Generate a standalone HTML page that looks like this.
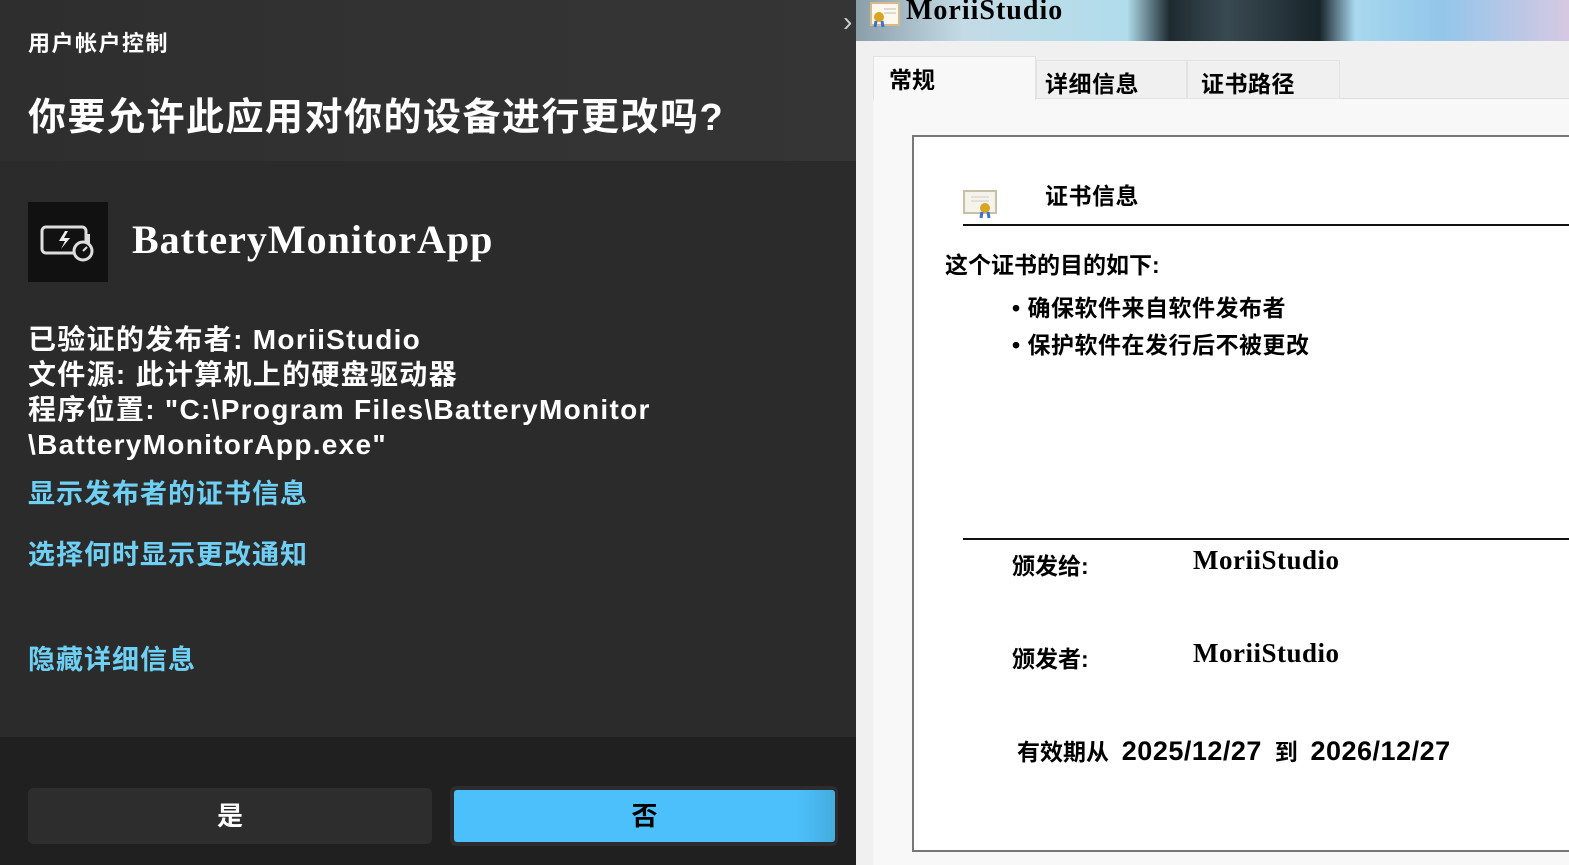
<!DOCTYPE html>
<html><head><meta charset="utf-8"><style>
*{margin:0;padding:0;box-sizing:border-box}
body{width:1569px;height:865px;overflow:hidden;position:relative;font-family:"Liberation Sans","Noto Sans CJK SC",sans-serif;background:#f0f0f0}
.a{position:absolute;white-space:nowrap}
#left{position:absolute;left:0;top:0;width:856px;height:865px;background:#2b2b2b;color:#fff}
#hd{position:absolute;left:0;top:0;width:856px;height:161px;background:linear-gradient(90deg,#2e2e2e,#333 60%,#353535)}
#ft{position:absolute;left:0;top:737px;width:856px;height:128px;background:#202020}
.b{font-weight:bold}
.link{color:#6fd0f5;font-weight:bold;font-size:27px;letter-spacing:1px}
.info{font-size:28px;font-weight:bold;line-height:35px;letter-spacing:1.3px}
.k{color:#000;font-weight:bold}
</style></head><body>
<div id="left">
<div id="hd"></div>
<div class="a b" style="left:28px;top:26px;font-size:22px;letter-spacing:1.5px">用户帐户控制</div>
<div class="a b" style="left:28px;top:86px;font-size:38px;letter-spacing:1.5px">你要允许此应用对你的设备进行更改吗?</div>
<div class="a" style="left:28px;top:202px;width:80px;height:80px;background:#111">
<svg width="80" height="80" viewBox="0 0 80 80"><rect x="14" y="25" width="44" height="26" rx="4" fill="none" stroke="#ddd" stroke-width="3"/><rect x="58" y="32" width="4" height="12" fill="#ddd"/><path d="M37 29 L31 39 L37 39 L33 47 L42 36 L36 36 L40 29Z" fill="#eee"/><circle cx="55" cy="49" r="9" fill="#111" stroke="#ddd" stroke-width="3"/><path d="M55 49 L59 45" stroke="#ddd" stroke-width="2"/></svg></div>
<div class="a b" style="left:132px;top:216px;font-size:40px;font-family:'Liberation Serif',serif;letter-spacing:1px">BatteryMonitorApp</div>
<div class="a info" style="left:28px;top:322px">已验证的发布者: MoriiStudio<br>文件源: 此计算机上的硬盘驱动器<br>程序位置: "C:\Program Files\BatteryMonitor<br>\BatteryMonitorApp.exe"</div>
<div class="a link" style="left:28px;top:472px">显示发布者的证书信息</div>
<div class="a link" style="left:28px;top:533px">选择何时显示更改通知</div>
<div class="a link" style="left:28px;top:638px">隐藏详细信息</div>
<div id="ft"></div>
<div class="a" style="left:28px;top:788px;width:404px;height:56px;background:#2d2d2d;border-radius:5px;font-size:26px;font-weight:bold;text-align:center;line-height:56px">是</div>
<div class="a" style="left:450px;top:786px;width:388px;height:60px;background:#2d2d2d;border-radius:6px"></div>
<div class="a" style="left:454px;top:790px;width:381px;height:52px;background:linear-gradient(90deg,#4cc0fb 90%,#45acdf);border-radius:3px;color:#000;font-size:26px;font-weight:bold;text-align:center;line-height:52px">否</div>
</div>
<div class="a" style="left:843px;top:6px;color:#ccc;font-size:28px">›</div>
<div class="a" style="left:856px;top:0;width:713px;height:41px;background:linear-gradient(90deg,#8a9ea8 0%,#c4dbe6 15%,#b0dcec 38%,#1e2a30 44%,#3a4a52 52%,#18242a 65%,#a8d8ee 70%,#92c6ea 82%,#d6c8e2 100%)"></div>
<svg class="a" style="left:870px;top:2px" width="30" height="26" viewBox="0 0 30 26"><rect x="1" y="1" width="28" height="22" fill="#fdf8ee" stroke="#d9b98a" stroke-width="2"/><line x1="14" y1="7" x2="26" y2="7" stroke="#bbb"/><line x1="14" y1="11" x2="26" y2="11" stroke="#bbb"/><circle cx="9" cy="15" r="5" fill="#d9a520"/><path d="M6 19 L5 25 M12 19 L13 25" stroke="#3a6fd8" stroke-width="3"/></svg>
<div class="a b" style="left:906px;top:-5px;font-size:28px;font-family:'Liberation Serif',serif;color:#000;letter-spacing:1px">MoriiStudio</div>
<div class="a" style="left:856px;top:41px;width:16px;height:824px;background:#f0f0f0"></div>
<div class="a" style="left:873px;top:98px;width:696px;height:767px;background:#f8f8f8;border-top:1px solid #ddd"></div>
<div class="a" style="left:873px;top:56px;width:163px;height:44px;background:#f8f8f8;border:1px solid #e2e2e2;border-bottom:none"></div>
<div class="a" style="left:1036px;top:60px;width:151px;height:39px;background:#f0f0f0;border:1px solid #e2e2e2"></div>
<div class="a" style="left:1187px;top:60px;width:153px;height:39px;background:#f0f0f0;border:1px solid #e2e2e2"></div>
<div class="a k" style="left:889px;top:61px;font-size:23px">常规</div>
<div class="a k" style="left:1045px;top:65px;font-size:23px;letter-spacing:0.5px">详细信息</div>
<div class="a k" style="left:1201px;top:65px;font-size:23px;letter-spacing:0.5px">证书路径</div>
<div class="a" style="left:912px;top:135px;width:657px;height:717px;background:#fff;border:2px solid #777;border-right:none"></div>
<svg class="a" style="left:963px;top:189px" width="34" height="30" viewBox="0 0 34 30"><rect x="1" y="2" width="32" height="22" fill="#f6f3ea" stroke="#c8bfa8" stroke-width="2"/><line x1="8" y1="8" x2="26" y2="8" stroke="#ccc"/><line x1="8" y1="12" x2="26" y2="12" stroke="#ccc"/><circle cx="22" cy="19" r="5" fill="#d9a520"/><path d="M19 23 L18 29 M25 23 L26 29" stroke="#3a6fd8" stroke-width="3"/></svg>
<div class="a k" style="left:1045px;top:177px;font-size:23px;letter-spacing:0.5px">证书信息</div>
<div class="a" style="left:963px;top:224px;width:606px;height:2px;background:#111"></div>
<div class="a k" style="left:945px;top:246px;font-size:23px">这个证书的目的如下:</div>
<div class="a k" style="left:1012px;top:289px;font-size:23px;letter-spacing:0.5px">• 确保软件来自软件发布者</div>
<div class="a k" style="left:1012px;top:326px;font-size:23px;letter-spacing:0.5px">• 保护软件在发行后不被更改</div>
<div class="a" style="left:963px;top:538px;width:606px;height:2px;background:#111"></div>
<div class="a k" style="left:1012px;top:547px;font-size:23px">颁发给:</div>
<div class="a k" style="left:1193px;top:545px;font-size:27px;font-family:'Liberation Serif',serif;letter-spacing:0.5px">MoriiStudio</div>
<div class="a k" style="left:1012px;top:640px;font-size:23px">颁发者:</div>
<div class="a k" style="left:1193px;top:638px;font-size:27px;font-family:'Liberation Serif',serif;letter-spacing:0.5px">MoriiStudio</div>
<div class="a k" style="left:1017px;top:733px;font-size:23px">有效期从&nbsp; <span style="font-size:27px;letter-spacing:0.5px">2025/12/27</span>&nbsp; 到&nbsp; <span style="font-size:27px;letter-spacing:0.5px">2026/12/27</span></div>
</body></html>
